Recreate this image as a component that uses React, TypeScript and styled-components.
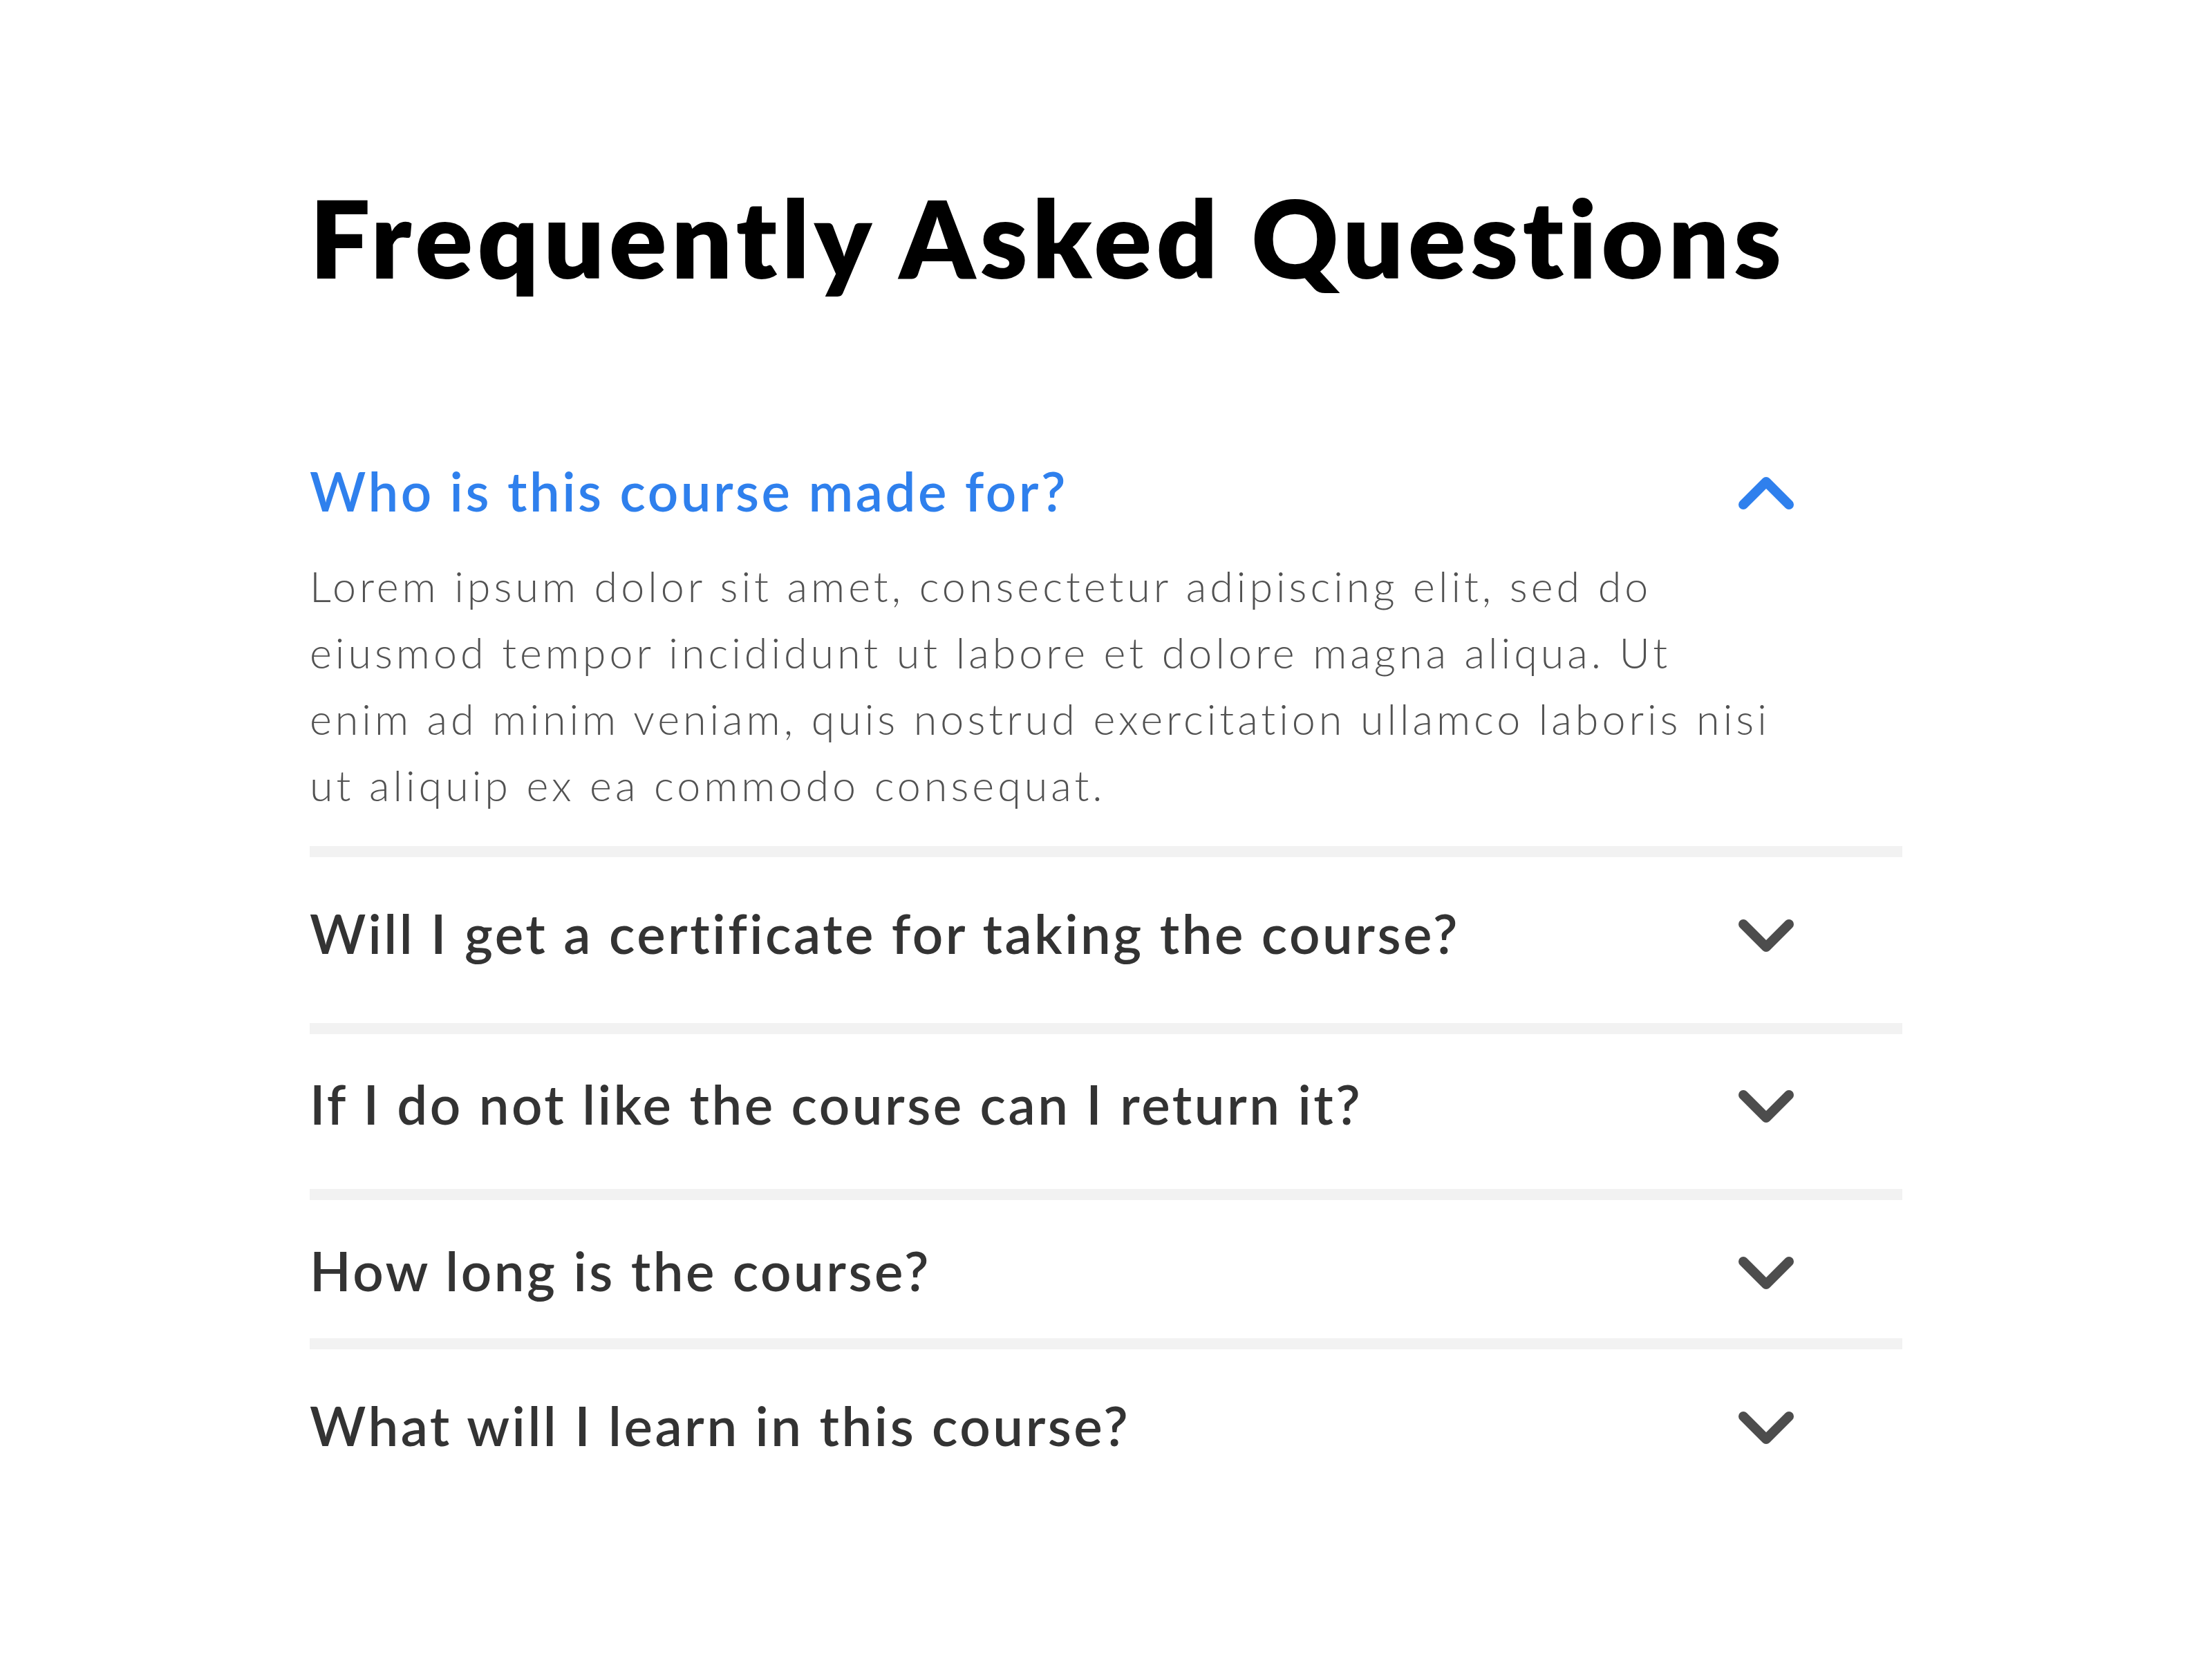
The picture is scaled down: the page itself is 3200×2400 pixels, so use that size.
import React from "react";
import styled, { createGlobalStyle } from "styled-components";

const GlobalStyle = createGlobalStyle`
  html, body {
    margin: 0;
    padding: 0;
    background: #ffffff;
  }
  body {
    font-family: Lato, "Open Sans", "Liberation Sans", sans-serif;
    -webkit-font-smoothing: antialiased;
  }
`;

const Page = styled.main`
  width: 2304px;
  margin: 0 auto;
  padding-top: 266px;
  padding-bottom: 200px;
`;

const Title = styled.h1`
  margin: 0 0 250px 0;
  font-family: Lato, "Liberation Sans", sans-serif;
  font-weight: 800;
  font-size: 155px;
  line-height: 1;
  color: #000000;
  letter-spacing: 6.5px;
`;

const List = styled.section`
  display: flex;
  flex-direction: column;
`;

const Item = styled.div<{ $pt: number; $pb: number; $divider: boolean }>`
  padding-top: ${(p) => p.$pt}px;
  padding-bottom: ${(p) => p.$pb}px;
  border-top: ${(p) => (p.$divider ? "16px solid #f2f2f2" : "none")};
`;

const Header = styled.div`
  display: flex;
  align-items: center;
  justify-content: space-between;
  padding-right: 157px;
  cursor: pointer;
`;

const Question = styled.h3<{ $open: boolean }>`
  margin: 0;
  font-family: Lato, "Liberation Sans", sans-serif;
  font-weight: 600;
  font-size: 78px;
  line-height: 78px;
  letter-spacing: 3.5px;
  color: ${(p) => (p.$open ? "#2f80ed" : "#333333")};
`;

const ChevronBox = styled.span`
  display: flex;
  width: 80px;
  height: 47px;
  margin-top: 7px;
  flex: 0 0 auto;
`;

const Answer = styled.p`
  margin: 51px 0 0 0;
  font-family: Lato, "Liberation Sans", sans-serif;
  font-weight: 300;
  font-size: 61px;
  line-height: 96px;
  letter-spacing: 5px;
  color: #525252;
`;

const Chevron = ({ up, color }: { up: boolean; color: string }) => (
  <ChevronBox>
    <svg width="80" height="47" viewBox="0 0 80 47" fill="none">
      <polyline
        points={up ? "7,40 40,7 73,40" : "7,7 40,40 73,7"}
        stroke={color}
        strokeWidth="14"
        strokeLinecap="round"
        strokeLinejoin="round"
      />
    </svg>
  </ChevronBox>
);

const faqs = [
  { q: "Who is this course made for?", open: true, pt: 0, pb: 40 },
  { q: "Will I get a certificate for taking the course?", open: false, pt: 71, pb: 91 },
  { q: "If I do not like the course can I return it?", open: false, pt: 62, pb: 84 },
  { q: "How long is the course?", open: false, pt: 63, pb: 59 },
  { q: "What will I learn in this course?", open: false, pt: 71, pb: 60 },
];

export default function App() {
  return (
    <>
      <GlobalStyle />
      <Page>
        <Title>Frequently Asked Questions</Title>
        <List>
          {faqs.map((f, i) => (
            <Item key={f.q} $pt={f.pt} $pb={f.pb} $divider={i > 0}>
              <Header>
                <Question $open={f.open}>{f.q}</Question>
                <Chevron up={f.open} color={f.open ? "#2f80ed" : "#4d4d4d"} />
              </Header>
              {f.open && (
                <Answer>
                  Lorem ipsum dolor sit amet, consectetur adipiscing elit, sed do
                  <br />
                  eiusmod tempor incididunt ut labore et dolore magna aliqua. Ut
                  <br />
                  enim ad minim veniam, quis nostrud exercitation ullamco laboris nisi
                  <br />
                  ut aliquip ex ea commodo consequat.
                </Answer>
              )}
            </Item>
          ))}
        </List>
      </Page>
    </>
  );
}
